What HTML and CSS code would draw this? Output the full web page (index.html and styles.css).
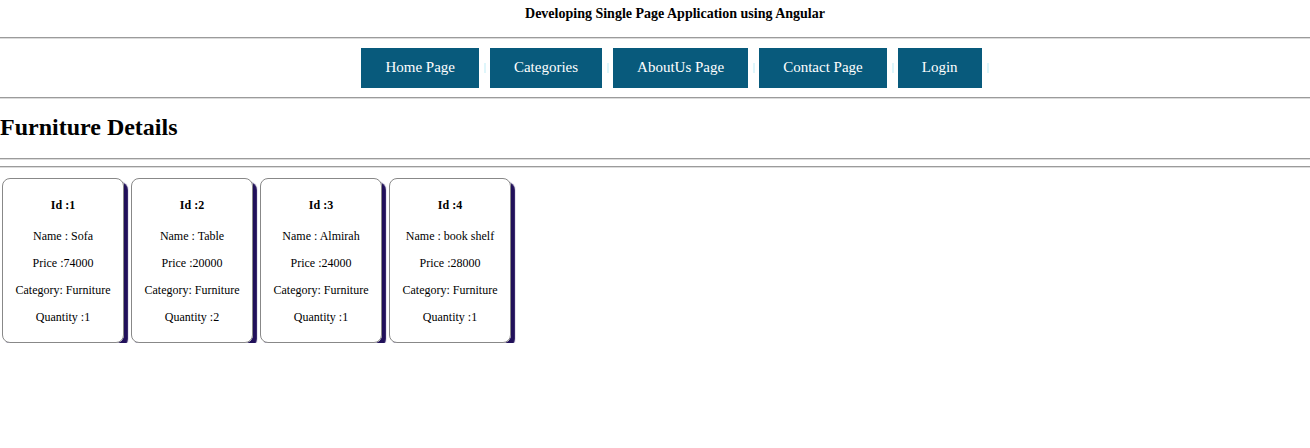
FILE: index.html
```html
<!DOCTYPE html>
<html>
<head>
<meta charset="utf-8">
<link rel="stylesheet" href="styles.css">
</head>
<body>
<div class="title">Developing Single Page Application using Angular</div>
<div class="rule"></div>
<nav class="nav">
  <div class="nav-item"><a class="btn">Home Page</a><span class="sep"></span></div>
  <div class="nav-item"><a class="btn">Categories</a><span class="sep"></span></div>
  <div class="nav-item"><a class="btn">AboutUs Page</a><span class="sep"></span></div>
  <div class="nav-item"><a class="btn">Contact Page</a><span class="sep"></span></div>
  <div class="nav-item"><a class="btn">Login</a><span class="sep"></span></div>
</nav>
<div class="rule"></div>
<h2 class="heading">Furniture Details</h2>
<div class="rule rule-a"></div>
<div class="rule rule-b"></div>
<div class="cards">
  <div class="card">
    <p class="id">Id :1</p>
    <p class="row first">Name : Sofa</p>
    <p class="row">Price :74000</p>
    <p class="row">Category: Furniture</p>
    <p class="row">Quantity :1</p>
  </div>
  <div class="card">
    <p class="id">Id :2</p>
    <p class="row first">Name : Table</p>
    <p class="row">Price :20000</p>
    <p class="row">Category: Furniture</p>
    <p class="row">Quantity :2</p>
  </div>
  <div class="card">
    <p class="id">Id :3</p>
    <p class="row first">Name : Almirah</p>
    <p class="row">Price :24000</p>
    <p class="row">Category: Furniture</p>
    <p class="row">Quantity :1</p>
  </div>
  <div class="card">
    <p class="id">Id :4</p>
    <p class="row first">Name : book shelf</p>
    <p class="row">Price :28000</p>
    <p class="row">Category: Furniture</p>
    <p class="row">Quantity :1</p>
  </div>
</div>
</body>
</html>
```

FILE: styles.css
```css
html, body {
  margin: 0;
  padding: 0;
  background: #ffffff;
  color: #000000;
  font-family: "Liberation Serif", "Times New Roman", serif;
}

.title {
  padding: 6px 0 0 40px;
  height: 31px;
  line-height: 16px;
  text-align: center;
  font-size: 14px;
  font-weight: bold;
}

.rule {
  height: 1px;
  background: #9b9b9b;
  border-bottom: 1px solid #dcdcdc;
}

.nav {
  display: flex;
  justify-content: center;
  padding: 9px 0 9px 44px;
}

.nav-item {
  display: flex;
  align-items: center;
}

.btn {
  display: flex;
  align-items: center;
  height: 40px;
  padding: 0 24px 2px 24px;
  box-sizing: border-box;
  background: #085a7c;
  color: #ffffff;
  font-size: 15px;
}

.sep {
  width: 2px;
  height: 10px;
  margin: 0 4px 0 5px;
  background: #dff6fb;
}

.heading {
  margin: 0;
  padding: 15px 0 17px 0;
  font-size: 24px;
  line-height: 27px;
  font-weight: bold;
}

.rule-b {
  margin-top: 6px;
}

.cards {
  display: flex;
  gap: 7px;
  padding: 10px 0 0 2px;
}

.card {
  width: 122px;
  height: 165px;
  border: 1px solid #888888;
  border-radius: 8px;
  box-shadow: 4px 4px 1px #21105a;
  text-align: center;
  font-size: 12px;
  padding-top: 19px;
  box-sizing: border-box;
}

.card p {
  margin: 0;
  line-height: 14px;
}

.id {
  font-weight: bold;
}

.row {
  margin-top: 13px !important;
}

.row.first {
  margin-top: 17px !important;
}
```
